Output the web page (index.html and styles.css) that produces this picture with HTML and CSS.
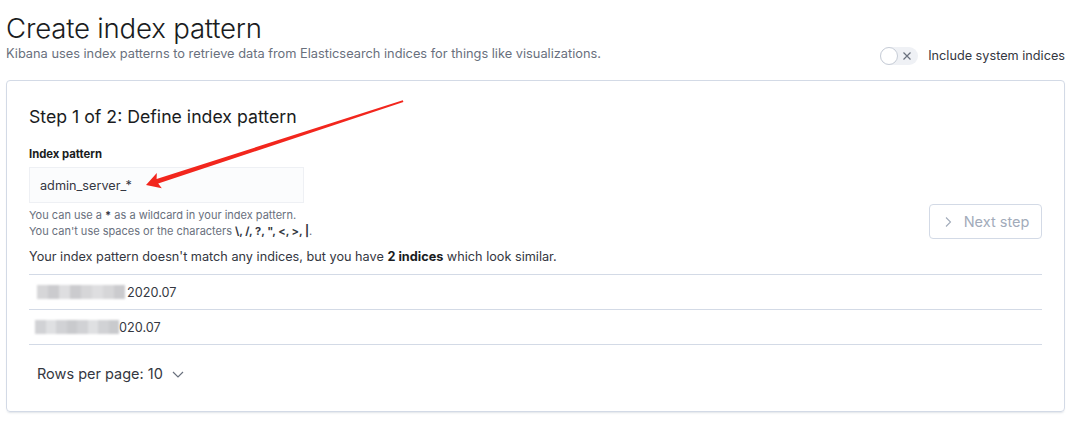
FILE: index.html
```html
<!DOCTYPE html>
<html>
<head>
<meta charset="utf-8">
<link rel="stylesheet" href="styles.css">
</head>
<body>
<div class="page">
  <header class="header">
    <div class="header-text">
      <h1 class="title">Create index pattern</h1>
      <p class="subtitle">Kibana uses index patterns to retrieve data from Elasticsearch indices for things like visualizations.</p>
    </div>
    <label class="switch">
      <span class="switch-track">
        <span class="switch-knob"></span>
        <svg class="switch-x" width="10" height="10" viewBox="0 0 10 10"><path d="M1.5 1.5 L8.5 8.5 M8.5 1.5 L1.5 8.5" stroke="#69707d" stroke-width="1.2" fill="none"/></svg>
      </span>
      <span class="switch-label">Include system indices</span>
    </label>
  </header>

  <section class="panel">
    <div class="step-head">
      <div class="step-form">
        <h2 class="step-title">Step 1 of 2: Define index pattern</h2>
        <div class="field">
          <div class="field-label">Index pattern</div>
          <div class="input">admin_server_*</div>
          <div class="help">
            <div>You can use a <b>*</b> as a wildcard in your index pattern.</div>
            <div>You can't use spaces or the characters <b>\, /, ?, ", &lt;, &gt;, |</b>.</div>
          </div>
        </div>
      </div>
      <button class="next-btn">
        <svg width="12" height="12" viewBox="0 0 12 12"><path d="M4 1.5 L8.5 6 L4 10.5" stroke="#a2abba" stroke-width="1.1" fill="none"/></svg>
        <span>Next step</span>
      </button>
    </div>

    <p class="notice">Your index pattern doesn't match any indices, but you have <b>2 indices</b> which look similar.</p>

    <div class="table">
      <div class="row">
        <span class="mosaic m1"><i></i><i></i><i></i><i></i><i></i><i></i><i></i><i></i></span><span class="cell-text">2020.07</span>
      </div>
      <div class="row">
        <span class="mosaic m2"><i></i><i></i><i></i><i></i><i></i><i></i><i></i><i></i></span><span class="cell-text">020.07</span>
      </div>
    </div>

    <div class="pager">
      <span>Rows per page: 10</span>
      <svg width="14" height="14" viewBox="0 0 14 14"><path d="M2 5 L7 10 L12 5" stroke="#69707d" stroke-width="1.2" fill="none"/></svg>
    </div>
  </section>

  <svg class="arrow" width="1080" height="430" viewBox="0 0 1080 430">
    <polygon points="146,185 156.8,173 156.6,178.9 402.8,100.3 403.4,101.9 158.2,183.6 161.8,188.25" fill="#f2261d"/>
  </svg>
</div>
</body>
</html>
```
FILE: styles.css
```css
* { box-sizing: border-box; }
html, body { margin: 0; padding: 0; background: #fff; }
body {
  font-family: Inter, "Noto Sans", "Liberation Sans", sans-serif;
  color: #343741;
  width: 1080px;
  height: 430px;
  overflow: hidden;
}
.page { position: relative; padding: 11px 15px 0 6px; }

.header { display: flex; align-items: flex-end; justify-content: space-between; }
.title {
  margin: 0;
  font-size: 27.6px;
  font-weight: 300;
  line-height: 34px;
  color: #1a1c21;
  letter-spacing: -0.2px;
}
.subtitle {
  margin: -1px 0 0;
  font-size: 12.8px;
  line-height: 20px;
  color: #69707d;
}

.switch { display: flex; align-items: center; gap: 10px; margin-bottom: -1px; }
.switch-track {
  position: relative;
  width: 38px; height: 18px;
  border-radius: 9px;
  background: #eff1f5;
  display: flex; align-items: center; justify-content: flex-end;
  padding-right: 6px;
}
.switch-knob {
  position: absolute; left: 0; top: 0;
  width: 18px; height: 18px;
  border-radius: 50%;
  background: #fff;
  border: 1px solid #c6ccd6;
}
.switch-x { display: block; }
.switch-label { font-size: 12.7px; color: #343741; line-height: 18px; }

.panel {
  margin-top: 16px;
  border: 1px solid #d3dae6;
  border-radius: 4px;
  box-shadow: 0 2px 2px -1px rgba(152,162,179,0.3);
  padding: 24px 22px 28px 22px;
  height: 332px;
}

.step-head { display: flex; align-items: flex-end; justify-content: space-between; }
.step-title {
  margin: 0 0 17px;
  font-size: 17.7px;
  font-weight: 400;
  line-height: 24px;
  color: #1a1c21;
}
.field-label { font-size: 11.3px; font-weight: 700; color: #1a1c21; line-height: 16px; margin-bottom: 5px; }
.input {
  width: 275px; height: 36px;
  background: #fbfcfd;
  border: 1px solid #eef0f4;
  padding: 0 10px;
  display: flex; align-items: center;
  font-size: 12.7px;
  color: #343741;
}
.help { margin-top: 4px; font-size: 11px; line-height: 16px; color: #69707d; }
.help b { color: #343741; font-weight: 700; }

.next-btn {
  width: 113px; height: 35px;
  margin-bottom: 0;
  border: 1px solid #d3dae6;
  border-radius: 4px;
  background: #fff;
  display: flex; align-items: center; justify-content: center; gap: 10px;
  font-family: inherit;
  font-size: 14.5px;
  color: #a2abba;
  padding: 0 10px;
}
.next-btn svg { display: block; }

.notice { margin: 9px 0 0; font-size: 12.7px; line-height: 18px; }
.notice b { font-weight: 700; color: #1a1c21; }

.table { margin-top: 8px; border-top: 1px solid #d3dae6; }
.row {
  height: 35px;
  border-bottom: 1px solid #d3dae6;
  display: flex; align-items: center;
  padding-left: 8px;
  font-size: 12.7px;
}
.mosaic { display: inline-flex; height: 14px; filter: blur(1px); }
.mosaic i { display: block; width: 11px; height: 14px; }
.m1 { width: 88px; margin-right: 2px; }
.m1 i:nth-child(odd) { background: #d6d6d8; }
.m1 i:nth-child(even) { background: #cbcbce; }
.m1 i:nth-child(3n) { background: #dedee0; }
.m2 { width: 84px; margin-right: 0; margin-left: -2px; }
.m2 i:nth-child(odd) { background: #d1d2d5; }
.m2 i:nth-child(even) { background: #dfe0e2; }
.m2 i:nth-child(4n) { background: #c9cacd; }

.pager {
  margin-top: 20px;
  padding-left: 8px;
  display: flex; align-items: center; gap: 8px;
  font-size: 14.5px;
  line-height: 18px;
  color: #343741;
}
.pager svg { display: block; }

.arrow { position: absolute; left: 0; top: 0; pointer-events: none; }
```
